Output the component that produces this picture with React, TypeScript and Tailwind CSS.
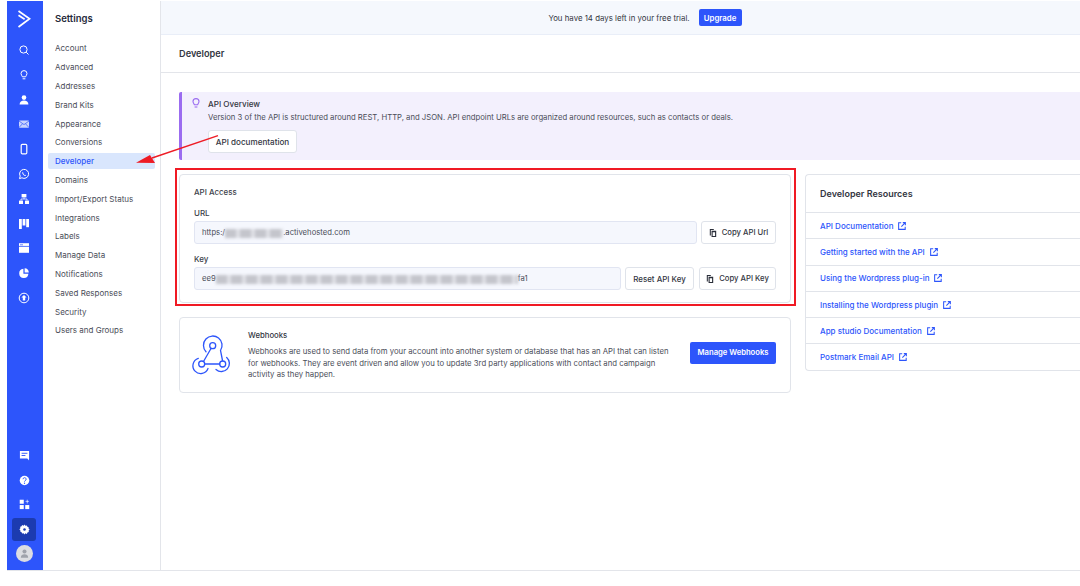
import React from "react";

const nav = ["Account","Advanced","Addresses","Brand Kits","Appearance","Conversions","Developer","Domains","Import/Export Status","Integrations","Labels","Manage Data","Notifications","Saved Responses","Security","Users and Groups"];
const links = ["API Documentation","Getting started with the API","Using the Wordpress plug-in","Installing the Wordpress plugin","App studio Documentation","Postmark Email API"];

function Ic({ children }: { children: React.ReactNode }) {
  return <svg viewBox="0 0 12 12" className="w-[12px] h-[12px] text-white" fill="none" stroke="currentColor" strokeWidth="1">{children}</svg>;
}
const top: React.ReactNode[] = [
  <Ic><circle cx="5.5" cy="5.5" r="3.6"/><path d="M8.2 8.2L10.5 10.5"/></Ic>,
  <Ic><path d="M3 4.6a3 3 0 1 1 6 0c0 1.4-1.1 2-1.4 3.2H4.400C4.100 6.600 3 6 3 4.600z"/><path d="M4.600 9.800h2.800"/></Ic>,
  <Ic><circle cx="6" cy="3.600" r="2.300" fill="currentColor" stroke="none"/><path d="M1.600 10.500c0-2.600 2-4 4.400-4s4.400 1.400 4.400 4z" fill="currentColor" stroke="none"/></Ic>,
  <Ic><rect x="1" y="2.500" width="10" height="7.200" rx=".6" fill="currentColor" fillOpacity=".75" stroke="none"/><path d="M1 3l5 3.600L11 3M1 9.500l3.400-3.600M11 9.500L7.600 5.900" stroke="#2d55fb" strokeWidth=".7"/></Ic>,
  <Ic><rect x="3.200" y="1.300" width="5.600" height="9.600" rx="1.100" strokeWidth="1.200"/></Ic>,
  <Ic><path d="M1.500 10.600l.7-2.500a4.500 4.500 0 1 1 1.700 1.700z"/><path d="M4.400 4c-.6.8.2 2 1 2.900s2 1.500 2.600.9l-.8-1-.7.3-1.200-1.300.3-.7z" fill="currentColor" stroke="none"/></Ic>,
  <Ic><g fill="currentColor" stroke="none"><rect x="3.600" y="1" width="4.800" height="3.400"/><rect x="1" y="7.600" width="4" height="3.400"/><rect x="7" y="7.600" width="4" height="3.400"/></g><path d="M6 4.400v1.600M3 7.600V6h6v1.600" strokeWidth=".8"/></Ic>,
  <Ic><g fill="currentColor" stroke="none"><rect x="1" y="1" width="2.800" height="10"/><rect x="4.600" y="1" width="2.800" height="6.500"/><rect x="8.200" y="1" width="2.800" height="8.200"/></g></Ic>,
  <Ic><path d="M1 1.200h10v9.600H1z" fill="currentColor" stroke="none"/><path d="M1 4.400h10" stroke="#2d55fb" strokeWidth=".8"/><path d="M2 2.800h3" stroke="#2d55fb" strokeWidth=".7"/></Ic>,
  <Ic><path d="M5.400 1.800a4.600 4.600 0 1 0 5 5H5.400z" fill="currentColor" stroke="none"/><path d="M6.600 1.200v4.200h4.200A4.400 4.400 0 0 0 6.600 1.200z" fill="currentColor" stroke="none"/></Ic>,
  <Ic><circle cx="6" cy="6" r="4.800" strokeWidth="1"/><path d="M6 2.900l2.600 2.700H7.200v2.800H4.800V5.600H3.400z" fill="currentColor" stroke="none"/></Ic>,
];

const CopyIcon = () => (
  <svg viewBox="0 0 10 10" className="w-[8px] h-[8px] text-[#2b2f3a] shrink-0" fill="currentColor"><path d="M1 0h5v1.400H2.300V8H1z"/><path fillRule="evenodd" d="M3.200 2.200h5.800V10H3.200zM4.600 4v4.600h3V4z"/></svg>
);
const Ext = () => (
  <svg viewBox="0 0 10 10" className="w-[8px] h-[8px] shrink-0 text-[#2d55fb]" fill="none" stroke="currentColor" strokeWidth="1.300"><path d="M4 1H.8v8.200H9V6"/><path d="M4.200 5.800L8.800 1.200M6 .8h3.200V4"/></svg>
);
const Btn = ({ children, className = "" }: { children: React.ReactNode; className?: string }) => (
  <button className={`h-[23px] flex items-center justify-center gap-[5px] bg-white border border-[#dfe3ea] rounded-[3px] font-medium text-[#33363f] ${className}`}>{children}</button>
);
const Blur = ({ className }: { className: string }) => <span className={`inline-block h-[9px] bg-[repeating-linear-gradient(90deg,#c4c5cc_0,#c4c5cc_11px,#dfe0e6_11px,#dfe0e6_15px)] blur-[1.5px] ${className}`} />;

export default function App() {
  return (
    <div className="relative w-[1080px] h-[586px] overflow-hidden bg-white pl-[7px] pt-px text-[#3c3f4a] text-[8px] leading-[12px]" style={{ fontFamily: "Inter, 'Noto Sans', sans-serif" }}>
      <div className="flex h-[570px] border-b border-[#e3e5ea]">
        <aside className="w-[36px] shrink-0 bg-[#2d55fb] flex flex-col items-center pr-[2px]">
          <svg viewBox="0 0 14 18" className="w-[14px] h-[18px] mt-[9px] text-white" fill="none" stroke="currentColor" strokeWidth="1.700"><path d="M1.500 1L12.600 8.800 1.500 17"/><path d="M1.500 5.200L7.600 9.200" /></svg>
          <div className="mt-[16px] flex flex-col items-center gap-[12.800px]">
            {top.map((ic, i) => <div key={i} className="h-[12px] flex items-center">{ic}</div>)}
          </div>
          <div className="mt-auto flex flex-col items-center">
            <div className="h-[24.600px] flex items-center">
              <svg viewBox="0 0 12 12" className="w-[11px] h-[11px] text-white" fill="currentColor"><path d="M1 1.200h10v8.800h-.2L11 11.400 9 9.400H1z"/><path d="M2.800 3.600h6.400M2.800 6h4.200" stroke="#2d55fb" strokeWidth="1"/></svg>
            </div>
            <div className="h-[24.600px] flex items-center">
              <svg viewBox="0 0 12 12" className="w-[11px] h-[11px]"><circle cx="6" cy="6" r="5.200" fill="#fff"/><path d="M4.400 4.600A1.700 1.700 0 1 1 6.700 6.200c-.5.3-.7.5-.7 1" stroke="#2d55fb" strokeWidth="1" fill="none"/><circle cx="6" cy="9" r=".7" fill="#2d55fb"/></svg>
            </div>
            <div className="h-[24.600px] mb-[1px] flex items-center">
              <svg viewBox="0 0 12 12" className="w-[11px] h-[11px]" fill="#fff"><rect x=".8" y=".8" width="4.400" height="4.400"/><rect x=".8" y="6.600" width="4.400" height="4.400"/><rect x="6.800" y="6.600" width="4.400" height="4.400"/><path d="M9 .8v4M7.200 2.600h3.600" stroke="#fff" strokeWidth=".7"/></svg>
            </div>
            <div className="w-[24px] h-[23px] rounded-[3px] bg-[#1c3bb0] flex items-center justify-center">
              <svg viewBox="0 0 12 12" className="w-[11px] h-[11px]"><path d="M6 .6l1 1.200 1.600-.2.6 1.500 1.500.6-.2 1.600L11.600 6l-1.100 1.200.2 1.600-1.500.6-.6 1.500L7 10.200 6 11.400 5 10.200l-1.600.2-.6-1.500-1.500-.6.2-1.600L.4 6l1.100-1.300-.2-1.600 1.500-.6.6-1.500L5 1.800z" fill="#fff"/><circle cx="6" cy="6" r="1.400" fill="#1c3bb0"/></svg>
            </div>
            <div className="w-[17px] h-[17px] rounded-full bg-[#dcdde2] flex items-center justify-center mt-[4px] mb-[8px]">
              <svg viewBox="0 0 12 12" className="w-[11px] h-[11px]" fill="#9fa2ab"><circle cx="6" cy="3.800" r="2.200"/><path d="M2 10.500c0-2.400 1.800-3.600 4-3.600s4 1.200 4 3.600z"/></svg>
            </div>
          </div>
        </aside>

        <nav className="w-[118px] shrink-0 border-r border-[#e3e5ea] pl-[5px] pr-[5px]">
          <div className="pl-[7px] pt-[12px] text-[9.500px] leading-[12px] font-semibold text-[#252a3a]">Settings</div>
          <ul className="mt-[14px]">
            {nav.map((n) => (
              <li key={n} className={`h-[18.800px] flex items-center pl-[7px] ${n === "Developer" ? "" : "text-[#4a4d58]"}`}>
                {n === "Developer"
                  ? <span className="-ml-[7px] pl-[7px] w-[107px] h-[16px] flex items-center bg-[#d9e6fd] rounded-[2px] text-[#2d55fb] font-medium">{n}</span>
                  : n}
              </li>
            ))}
          </ul>
        </nav>

        <main className="flex-1 min-w-0">
          <div className="h-[34px] bg-[#f5f8fd] border-b border-[#e9eef8] flex items-center justify-center gap-[9px] pl-[49px]">
            <span className="text-[#33363f] text-[7.850px]">You have 14 days left in your free trial.</span>
            <button className="h-[17px] w-[43px] rounded-[2px] bg-[#2d55fb] text-white font-semibold text-[7.800px]">Upgrade</button>
          </div>
          <div className="h-[38px] border-b border-[#e3e5ea] flex items-center pl-[18px] text-[9.200px] font-semibold text-[#33363f]">Developer</div>
          <div className="pl-[18px] pt-[19px]">
            <div className="h-[68px] bg-[#f3f0fd] border-l-[3px] border-[#9b6cf0] rounded-l-[2px] flex">
              <svg viewBox="0 0 12 12" className="w-[12px] h-[12px] ml-[8px] mt-[5px] text-[#9b6cf0]" fill="none" stroke="currentColor" strokeWidth="1.100"><path d="M3 4.600a3 3 0 1 1 6 0c0 1.400-1.100 2-1.400 3.200H4.400C4.100 6.600 3 6 3 4.600z"/><path d="M4.600 10h2.800"/></svg>
              <div className="ml-[6px] pt-[6px]">
                <div className="font-medium text-[#33363f] text-[8.100px]">API Overview</div>
                <div className="mt-[2px] text-[#4a4d58] whitespace-nowrap text-[7.710px]">Version 3 of the API is structured around REST, HTTP, and JSON. API endpoint URLs are organized around resources, such as contacts or deals.</div>
                <button className="mt-[6px] h-[23px] w-[89px] bg-white border border-[#dfe3ea] rounded-[3px] font-medium text-[#33363f] text-[8.100px]">API documentation</button>
              </div>
            </div>
            <div className="flex mt-[14px]">
              <div className="w-[612px] shrink-0">
                <section className="h-[129px] border border-[#e1e4ea] rounded-[4px] px-[14px] pt-[11px]">
                  <div className="font-medium text-[7.900px]">API Access</div>
                  <div className="mt-[9px] font-medium">URL</div>
                  <div className="mt-[2px] flex gap-[4px]">
                    <div className="flex-1 h-[23px] pt-[1px] bg-[#f5f7fd] border border-[#e1e5f2] rounded-[3px] flex items-center pl-[7px] text-[#4a4d58] text-[7.700px]">https:/<Blur className="w-[58px]" />.activehosted.com</div>
                    <Btn className="w-[75px] text-[7.700px]"><CopyIcon />Copy API Url</Btn>
                  </div>
                  <div className="mt-[9px] font-medium">Key</div>
                  <div className="mt-[2px] flex gap-[4px]">
                    <div className="flex-1 h-[23px] pt-[1px] bg-[#f5f7fd] border border-[#e1e5f2] rounded-[3px] flex items-center pl-[7px] text-[#4a4d58] text-[7.700px]">ee9<Blur className="w-[302px]" />fa1</div>
                    <Btn className="w-[69px] text-[7.900px]">Reset API Key</Btn>
                    <Btn className="w-[77px] ml-[1px] text-[7.700px]"><CopyIcon />Copy API Key</Btn>
                  </div>
                </section>
                <section className="mt-[14px] h-[76px] border border-[#e1e4ea] rounded-[4px] flex items-center pl-[6px] pr-[14px]">
                  <svg viewBox="0 0 50 50" className="w-[50px] h-[50px] shrink-0 text-[#2d55fb]" fill="none" stroke="currentColor" strokeWidth="1.300" strokeLinecap="round">
                    <circle cx="26.700" cy="15.700" r="3"/><circle cx="15.700" cy="34" r="3"/><circle cx="36.700" cy="34" r="3"/>
                    <path d="M25 18.500L17.500 31.500M18.700 34h15"/>
                    <path d="M20 21.700A9.300 9.300 0 1 1 34.500 20.500L36.500 30.500"/>
                    <path d="M12.300 28.300A7.800 7.800 0 1 0 22 38.500"/>
                    <path d="M40.700 27.500A8 8 0 0 1 30 39.500"/>
                  </svg>
                  <div className="ml-[12px] w-[428px] text-[#4a4d58] text-[7.750px] leading-[11.500px]">
                    <div className="font-medium text-[#33363f]">Webhooks</div>
                    <div className="mt-[5px]">Webhooks are used to send data from your account into another system or database that has an API that can listen for webhooks. They are event driven and allow you to update 3rd party applications with contact and campaign activity as they happen.</div>
                  </div>
                  <button className="ml-auto w-[86px] h-[22px] bg-[#2d55fb] rounded-[2px] text-white font-semibold text-[7.650px] -translate-y-[2px]">Manage Webhooks</button>
                </section>
              </div>
              <aside className="ml-[14px] flex-1 h-[197px] border border-r-0 border-[#e1e4ea] rounded-l-[4px]">
                <div className="h-[37px] flex items-center pl-[14px] text-[9px] font-semibold text-[#33363f]">Developer Resources</div>
                {links.map((l) => (
                  <a key={l} className="h-[26.300px] border-t border-[#e1e4ea] flex items-center gap-[5px] pl-[14px] text-[#2d55fb] font-medium">{l}<Ext /></a>
                ))}
              </aside>
            </div>
          </div>
        </main>
      </div>

      <div className="absolute left-[175px] top-[168px] w-[621px] h-[138px] border-2 border-[#f01a24] pointer-events-none" />
      <svg className="absolute left-[130px] top-[130px] w-[110px] h-[40px] pointer-events-none" viewBox="0 0 110 40">
        <path d="M88 5.700L22 28" stroke="#ee1c25" strokeWidth="1.400" />
        <path d="M6 32.700L20 25L25 33z" fill="#ee1c25" />
      </svg>
    </div>
  );
}
